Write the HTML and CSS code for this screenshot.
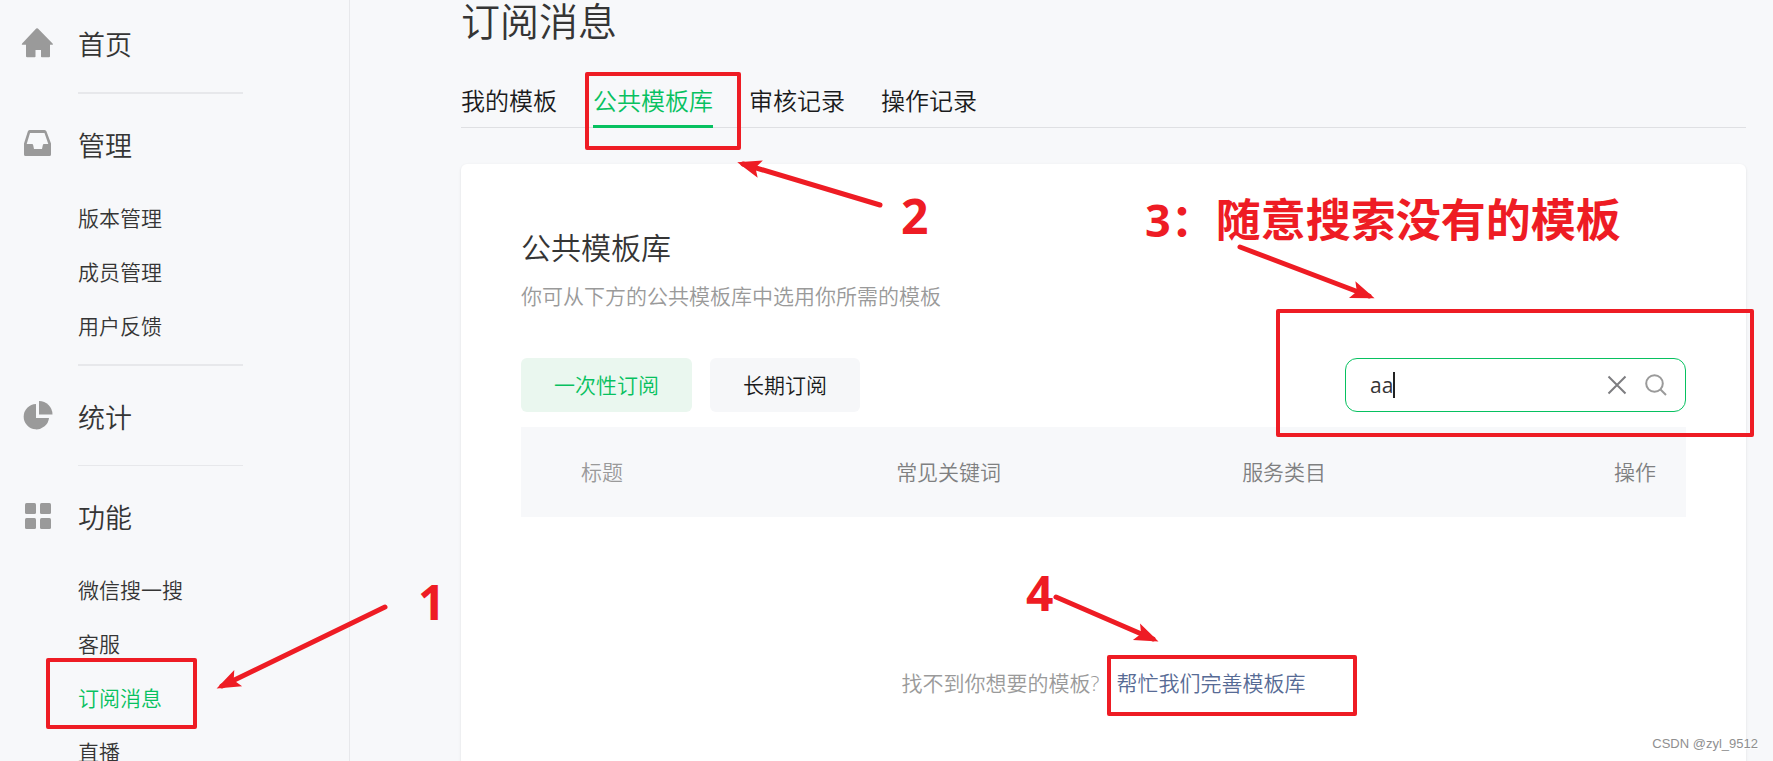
FILE: index.html
```html
<!DOCTYPE html>
<html lang="zh-CN">
<head>
<meta charset="utf-8">
<title>订阅消息</title>
<link rel="stylesheet" href="styles.css">
</head>
<body>
<div class="layout">
  <nav class="sidebar" aria-label="主菜单">
    <section class="group">
      <a class="group-title" href="#">
        <svg class="icon" viewBox="0 0 32 32"><path d="M15.2 1.600a1.200 1.200 0 0 1 1.700 0L31.600 16.400q.8 1.200-.4 1.400H29v11.500q0 1-1 1h-7.200q-.8 0-.8-.8V23h-5.500v6.500q0 .8-.8.8H6.200q-1.200 0-1.200-1V17.800H1.700q-1.500-.2-.6-1.400z"/></svg>
        <span>首页</span>
      </a>
    </section>
    <section class="group">
      <a class="group-title" href="#">
        <svg class="icon" viewBox="0 0 32 32"><path fill-rule="evenodd" d="M8.500 2h15q1.500 0 2 1.500L30 15.500V26.500q0 1.500-1.500 1.500h-24Q3 28 3 26.500V15.500L6.800 3.500Q7.200 2 8.500 2zM9 5L5.700 16H11q1 0 1.200 1.200L13 21h8l.8-3.800Q22 16 23 16h4.300L23.500 5z"/></svg>
        <span>管理</span>
      </a>
      <ul class="sub">
        <li><a href="#">版本管理</a></li>
        <li><a href="#">成员管理</a></li>
        <li><a href="#">用户反馈</a></li>
      </ul>
    </section>
    <section class="group">
      <a class="group-title" href="#">
        <svg class="icon" viewBox="0 0 32 32"><path d="M15 4v14h13A12.700 12.700 0 1 1 15 4z"/><path d="M18 1a13.500 13.500 0 0 1 13.500 13.500H18z"/></svg>
        <span>统计</span>
      </a>
    </section>
    <section class="group">
      <a class="group-title" href="#">
        <svg class="icon" viewBox="0 0 32 32"><rect x="4" y="3" width="11" height="11" rx="1.500"/><rect x="19" y="3" width="11" height="11" rx="1.500"/><rect x="4" y="18" width="11" height="11" rx="1.500"/><rect x="19" y="18" width="11" height="11" rx="1.500"/></svg>
        <span>功能</span>
      </a>
      <ul class="sub">
        <li><a href="#">微信搜一搜</a></li>
        <li><a href="#">客服</a></li>
        <li><a class="current" href="#">订阅消息</a></li>
        <li><a href="#">直播</a></li>
      </ul>
    </section>
  </nav>

  <main class="main">
    <h1 class="page-title">订阅消息</h1>
    <nav class="tabs" aria-label="模板">
      <a class="tab" href="#">我的模板</a>
      <a class="tab tab-active" href="#">公共模板库</a>
      <a class="tab" href="#">审核记录</a>
      <a class="tab" href="#">操作记录</a>
    </nav>

    <section class="card">
      <h2 class="card-title">公共模板库</h2>
      <p class="card-desc">你可从下方的公共模板库中选用你所需的模板</p>
      <div class="toolbar">
        <button class="pill pill-active" type="button">一次性订阅</button>
        <button class="pill" type="button">长期订阅</button>
        <div class="search">
          <input class="search-input" type="text" value="aa" aria-label="搜索模板">
          <span class="caret"></span>
          <button class="icon-button" type="button" aria-label="清空">
            <svg class="tool-icon" viewBox="0 0 24 24"><path d="M3.500 3.500l17 17M20.500 3.500l-17 17"/></svg>
          </button>
          <button class="icon-button icon-light" type="button" aria-label="搜索">
            <svg class="tool-icon" viewBox="0 0 24 24"><circle cx="10.500" cy="10.500" r="8.300"/><path d="M16.500 16.500l5.500 5.500"/></svg>
          </button>
        </div>
      </div>
      <table class="table">
        <thead>
          <tr>
            <th class="col-title">标题</th>
            <th class="col-keys">常见关键词</th>
            <th class="col-type">服务类目</th>
            <th class="col-action">操作</th>
          </tr>
        </thead>
      </table>
      <p class="empty"><span>找不到你想要的模板?</span><a class="link" href="#">帮忙我们完善模板库</a></p>
    </section>
  </main>
</div>

<div class="notes">
  <svg class="arrows" aria-hidden="true">
    <defs>
      <marker id="head" markerUnits="userSpaceOnUse" markerWidth="26" markerHeight="20" refX="19" refY="10" orient="auto">
        <path class="head" d="M25 10L1 1L6 10L1 19z"/>
      </marker>
    </defs>
    <path class="shaft" marker-end="url(#head)" d="M385 607L222 686"/>
    <path class="shaft" marker-end="url(#head)" d="M880 205L743 164"/>
    <path class="shaft" marker-end="url(#head)" d="M1240 247L1369 296"/>
    <path class="shaft" marker-end="url(#head)" d="M1056 597L1153 639"/>
  </svg>
  <div class="box box-menu"></div>
  <div class="box box-tab"></div>
  <div class="box box-search"></div>
  <div class="box box-link"></div>
  <span class="note note-1">1</span>
  <span class="note note-2">2</span>
  <span class="note note-3">3：随意搜索没有的模板</span>
  <span class="note note-4">4</span>
  <span class="watermark">CSDN @zyl_9512</span>
</div>
</body>
</html>
```
FILE: styles.css
```css
* { box-sizing: border-box; }

body {
  margin: 0;
  position: relative;
  height: 100vh;
  overflow: hidden;
  background: #f7f8fa;
  color: #353535;
  font-family: "Open Sans", "Noto Sans CJK SC", sans-serif;
  font-weight: 350;
  font-size: 21px;
}

a { color: inherit; text-decoration: none; }
h1, h2, p, ul { margin: 0; padding: 0; font-weight: 350; }
button, input { font: inherit; color: inherit; border: 0; padding: 0; background: none; }

.layout {
  display: grid;
  grid-template-columns: 350px 1fr;
  min-height: 100vh;
}

/* Sidebar */
.sidebar { border-right: 1px solid #e7e8eb; }
.group { padding: 12px 0 0 21px; }
.group:first-child { padding-top: 5px; }
.group:not(:last-child)::after {
  content: "";
  display: block;
  width: 165px;
  height: 2px;
  margin: 11px 0 0 57px;
  background: #e7e8eb;
}
.group:nth-child(3)::after { height: 1px; }
.group-title {
  display: flex;
  align-items: center;
  gap: 25px;
  height: 76px;
  font-size: 27px;
}
.icon { width: 32px; height: 32px; fill: #9a9a9a; }
.sub { margin: 9px 0 0 57px; list-style: none; }
.sub li { line-height: 54px; height: 54px; }
.current { color: #07c160; }

/* Main column */
.main {
  display: flex;
  flex-direction: column;
  padding: 0 27px 0 111px;
}
.page-title { font-size: 39px; line-height: 42px; }
.tabs {
  display: flex;
  gap: 36px;
  height: 52px;
  margin-top: 34px;
  border-bottom: 1px solid #dfe0e3;
  color: #1a1b1c;
  font-size: 24px;
}
.tab { height: 52px; line-height: 50px; }
.tab-active { color: #07c160; border-bottom: 3px solid #07c160; }

.card {
  flex: 1;
  margin-top: 36px;
  padding: 60px;
  background: #fff;
  border-radius: 6px 6px 0 0;
  box-shadow: 0 1px 3px rgba(0, 0, 0, 0.1);
}
.card-title { font-size: 30px; line-height: 48px; }
.card-desc { margin-top: 9px; line-height: 30px; color: #9a9a9a; }

.toolbar { display: flex; gap: 18px; margin-top: 47px; }
.pill {
  height: 54px;
  padding: 0 33px 2px;
  border-radius: 6px;
  background: #f6f7f9;
  color: #1a1b1c;
}
.pill-active { background: #eaf7ef; color: #07c160; }

.search {
  position: relative;
  display: flex;
  align-items: center;
  gap: 15px;
  width: 341px;
  height: 54px;
  margin-left: auto;
  padding: 0 17px 0 24px;
  border: 1px solid #07c160;
  border-radius: 12px;
}
.search-input { flex: 1; min-width: 0; outline: 0; font-weight: 400; }
.caret {
  position: absolute;
  left: 47px;
  top: 13px;
  width: 2px;
  height: 26px;
  background: #222;
}
.icon-button { display: flex; color: #7d7d80; }
.icon-light { color: #9a9a9a; }
.tool-icon { width: 24px; height: 24px; fill: none; stroke: currentColor; stroke-width: 2; }

.table {
  width: 100%;
  margin-top: 15px;
  border-collapse: collapse;
  table-layout: fixed;
  background: #f7f8fa;
}
.table th { height: 90px; padding: 0 0 2px; text-align: left; font-weight: 350; color: #7f8081; }
.table .col-title { width: 32.2%; padding-left: 60px; color: #9a9a9a; }
.table .col-keys { width: 29.7%; }
.table .col-action { padding-right: 30px; text-align: right; }

.empty {
  display: flex;
  justify-content: center;
  gap: 17px;
  margin-top: 150px;
  line-height: 32px;
  color: #9a9a9a;
}
.link { color: #576b95; }

/* Hand-drawn notes over the page */
.notes { position: absolute; inset: 0; pointer-events: none; }
.arrows { position: absolute; width: 100%; height: 100%; }
.shaft { fill: none; stroke: #ee1c24; stroke-width: 5; stroke-linecap: round; }
.head { fill: #ee1c24; }
.box { position: absolute; border: 4px solid #ee1c24; border-radius: 2px; }
.box-menu { left: 46px; top: 658px; width: 151px; height: 71px; }
.box-tab { left: 585px; top: 72px; width: 156px; height: 78px; }
.box-search { left: 1276px; top: 309px; width: 478px; height: 128px; }
.box-link { left: 1107px; top: 655px; width: 250px; height: 61px; }
.note {
  position: absolute;
  color: #ee1c24;
  font-size: 48px;
  font-weight: 700;
  line-height: 60px;
  white-space: nowrap;
}
.note-1 { left: 418px; top: 572px; }
.note-2 { left: 901px; top: 186px; }
.note-3 { left: 1145px; top: 190px; font-size: 45px; }
.note-4 { left: 1026px; top: 563px; }
.watermark {
  position: absolute;
  right: 15px;
  bottom: 9px;
  color: #8f8f8f;
  font: 13px/16px "Liberation Sans", sans-serif;
  text-shadow: 1px 1px 0 #fff;
}
```
